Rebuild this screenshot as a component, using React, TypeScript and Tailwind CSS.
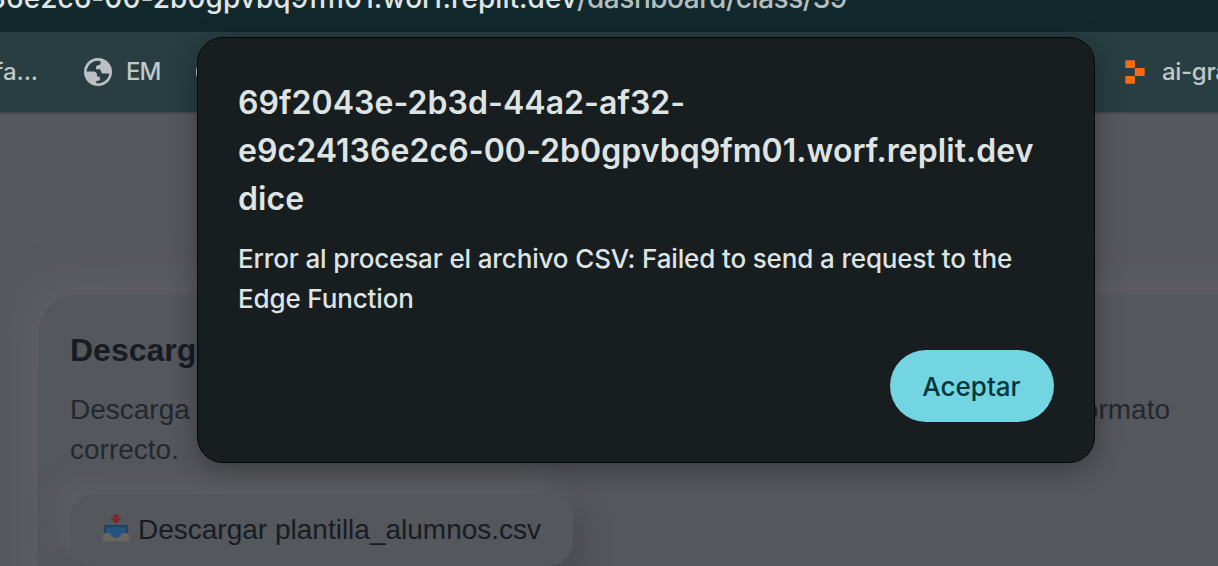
const ui = "font-['Inter',sans-serif]";
const web = "font-['Liberation_Sans',sans-serif]";

function Globe() {
  return (
    <svg viewBox="0 0 28 28" className="size-7 shrink-0">
      <circle cx="14" cy="14" r="14" fill="#bcc0c6" />
      <path
        d="M2.6 12.3A11.6 11.6 0 0 1 14.8 2.7C17 3.2 17.2 5 16.2 6.3C15.2 7.6 12 6.8 12 9.5V11.3H15.3C17.6 11.3 16.4 15.6 19 15.6H25.4A11.6 11.6 0 0 1 12.4 25.3V22.8H14.6C16.4 22.8 16.4 18.6 14.9 18.5H13C13.4 14.8 11.8 13.4 9.4 13.4H2.6Z"
        fill="#283e42"
      />
    </svg>
  );
}

function ReplitMark() {
  return (
    <svg viewBox="0 0 20 24" className="h-6 w-5 shrink-0" fill="#f76b15">
      <rect x="0.3" y="0.3" width="9.7" height="7.7" rx="1" />
      <rect x="9.8" y="8" width="9.9" height="8" rx="1" />
      <rect x="0.3" y="16" width="9.7" height="7.7" rx="1" />
    </svg>
  );
}

function InboxTray() {
  return (
    <svg viewBox="0 0 28 28" className="mb-1 h-7 w-7 shrink-0">
      <path d="M2.8 11H25.2L26.2 20H1.8Z" fill="#1d3a56" />
      <path d="M4.2 12.6H23.8L25 21H3Z" fill="#265280" />
      <path d="M1 19.2H7.6C9.6 19.2 9.4 24 14 24S18.4 19.2 20.4 19.2H27V27.2H1Z" fill="#696662" />
      <path d="M5.5 18H22.5L20.4 19.2C18.4 19.2 18.6 24 14 24S9.6 19.2 7.6 19.2Z" fill="#265280" />
      <path d="M11.4 0.4H16.6V4.4H19.2L14 10L8.8 4.4H11.4Z" fill="#7f2828" />
    </svg>
  );
}

export default function App() {
  return (
    <div className="relative flex h-[566px] w-[1218px] flex-col overflow-hidden bg-[#55585d]">
      <div className={`flex h-8 shrink-0 items-start overflow-hidden bg-[#11292d] ${ui}`}>
        <div className="-mt-5 flex w-[847px] justify-end whitespace-nowrap text-[28px] font-[450] leading-9 tracking-[0.05px] text-[#e0e5e5]">
          36e2c6-00-2b0gpvbq9fm01.worf.replit.dev
          <span className="tracking-[-0.46px] text-[#b5bfc0]">/dashboard/class/39</span>
        </div>
      </div>

      <div className={`flex h-20 shrink-0 items-center bg-[#283e42] text-2xl font-[450] text-[#c0c8c8] ${ui}`}>
        <div className="flex w-[38px] justify-end whitespace-nowrap tracking-[-0.1px]">fa...</div>
        <div className="ml-[46px] flex items-center gap-[14px]">
          <Globe />
          <span className="w-[35px] tracking-[-0.9px]">EM</span>
        </div>
        <div className="ml-[35px] h-3 w-2 rounded-l-sm bg-[#bcc0c6]" />
        <div className="ml-auto flex w-[93px] items-center gap-[17px] whitespace-nowrap">
          <ReplitMark />
          <span className="tracking-[-0.3px]">ai-gra</span>
        </div>
      </div>

      <main className={`grow border-t-2 border-[#484b4d] pl-[38px] pt-[180px] ${web}`}>
        <section className="h-[400px] w-[1300px] rounded-[40px] bg-[#54575c] px-8 pt-8 shadow-[-16px_-16px_32px_#5d5e63,16px_16px_32px_#484b50]">
          <h2 className="text-[32px] font-bold leading-[48px] text-[#181c22]">Descarga la plantilla</h2>
          <div className="mt-4 flex w-[1100px] justify-between text-[28px] leading-10 text-[#24282e]">
            <p>
              Descarga
              <br />
              correcto.
            </p>
            <p>formato</p>
          </div>
          <div className="mt-6 flex h-[72px] w-[503px] items-center rounded-[24px] bg-[#54575c] pl-8 text-[28px] text-[#181c22] shadow-[-12px_-12px_24px_#5d5e63,12px_12px_24px_#4a4c51]">
            <InboxTray />
            <span className="ml-2 whitespace-nowrap">Descargar plantilla_alumnos.csv</span>
          </div>
        </section>
      </main>

      <div
        role="dialog"
        className={`absolute left-[197px] top-[37px] flex h-[426px] w-[898px] flex-col rounded-[26px] border border-[#050808] bg-[#181d1f] px-10 pb-10 pt-[41px] text-[#dee4e4] shadow-[0_6px_28px_rgba(0,0,0,0.32)] ${ui}`}
      >
        <h1 className="whitespace-nowrap text-[32px] font-semibold leading-[48px] tracking-[0.05px]">
          69f2043e-2b3d-44a2-af32-
          <br />
          e9c24136e2c6-00-2b0gpvbq9fm01.worf.replit.dev
          <br />
          dice
        </h1>
        <p className="mt-4 whitespace-nowrap text-[26px] font-[450] leading-10 tracking-[-0.14px]">
          Error al procesar el archivo CSV: Failed to send a request to the
          <br />
          Edge Function
        </p>
        <button className="mt-auto h-[72px] w-[164px] self-end rounded-full bg-[#74d5e2] pr-px text-[26px] font-medium text-[#00363d]">
          Aceptar
        </button>
      </div>
    </div>
  );
}
